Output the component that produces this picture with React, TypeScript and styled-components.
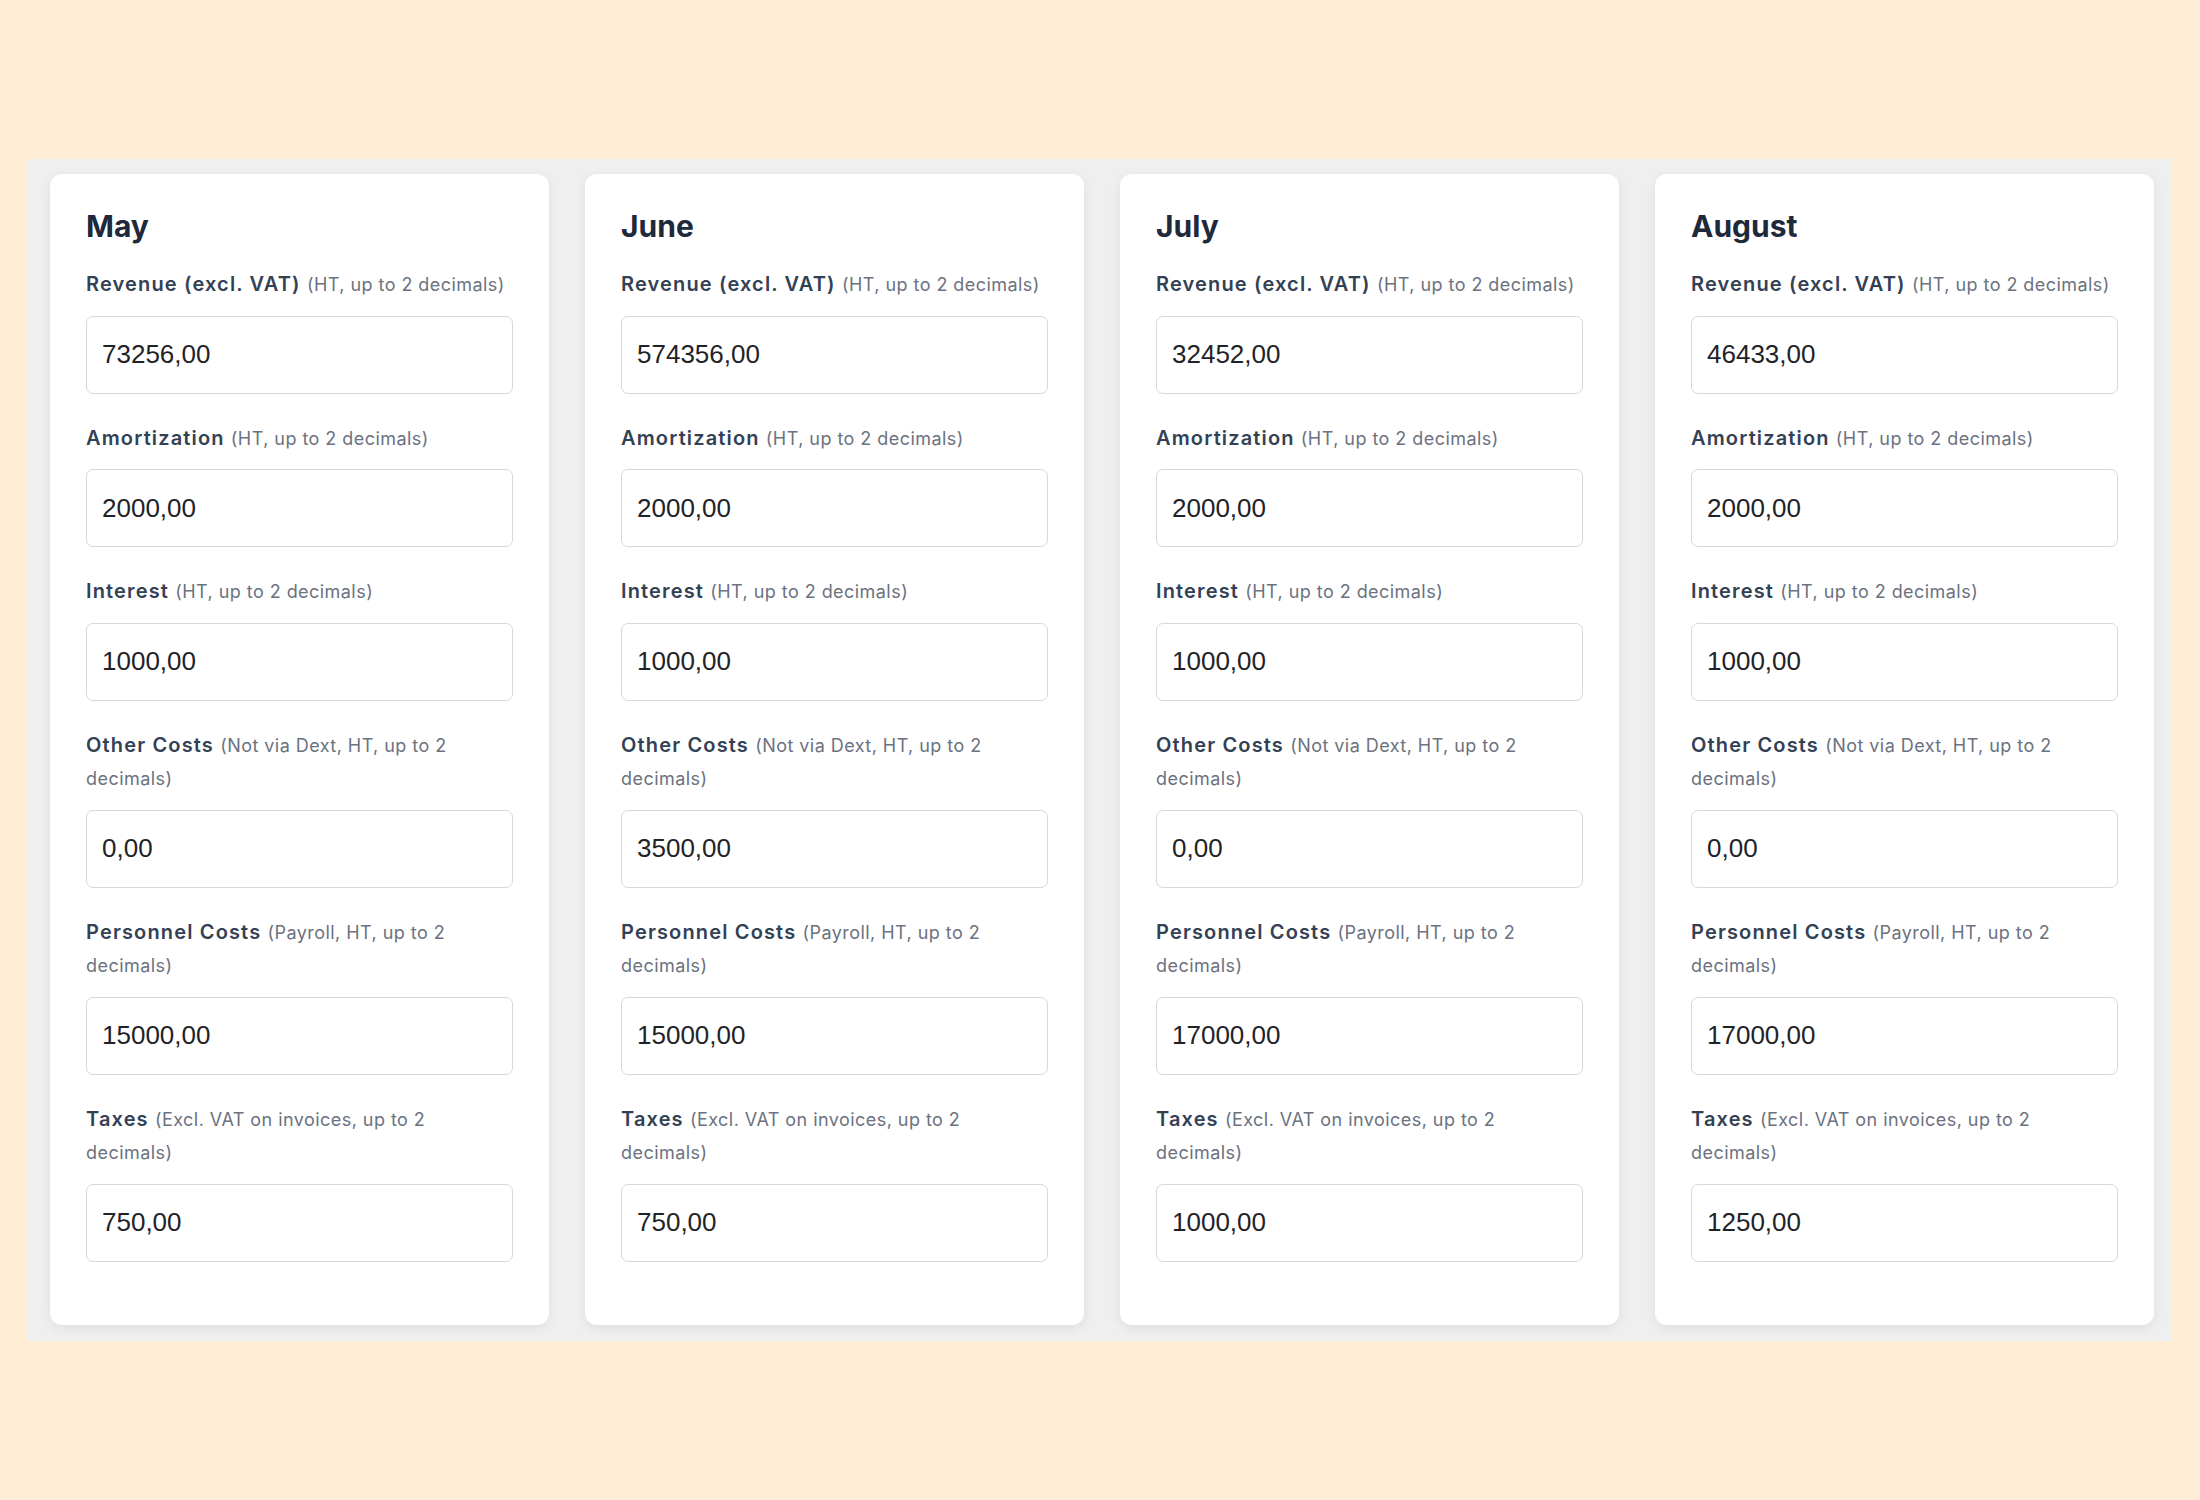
import React, { useState } from "react";
import styled, { createGlobalStyle } from "styled-components";

const GlobalStyle = createGlobalStyle`
  html, body {
    margin: 0;
    padding: 0;
    background: #ffedd5;
    font-family: Inter, "Noto Sans", "Liberation Sans", sans-serif;
  }
  * {
    box-sizing: border-box;
  }
`;

type Field = {
  key: string;
  label: string;
  hint: string;
};

const FIELDS: Field[] = [
  { key: "revenue", label: "Revenue (excl. VAT)", hint: "(HT, up to 2 decimals)" },
  { key: "amortization", label: "Amortization", hint: "(HT, up to 2 decimals)" },
  { key: "interest", label: "Interest", hint: "(HT, up to 2 decimals)" },
  { key: "other", label: "Other Costs", hint: "(Not via Dext, HT, up to 2 decimals)" },
  { key: "personnel", label: "Personnel Costs", hint: "(Payroll, HT, up to 2 decimals)" },
  { key: "taxes", label: "Taxes", hint: "(Excl. VAT on invoices, up to 2 decimals)" },
];

type MonthValues = Record<string, string>;

const MONTHS: { name: string; values: MonthValues }[] = [
  {
    name: "May",
    values: {
      revenue: "73256,00",
      amortization: "2000,00",
      interest: "1000,00",
      other: "0,00",
      personnel: "15000,00",
      taxes: "750,00",
    },
  },
  {
    name: "June",
    values: {
      revenue: "574356,00",
      amortization: "2000,00",
      interest: "1000,00",
      other: "3500,00",
      personnel: "15000,00",
      taxes: "750,00",
    },
  },
  {
    name: "July",
    values: {
      revenue: "32452,00",
      amortization: "2000,00",
      interest: "1000,00",
      other: "0,00",
      personnel: "17000,00",
      taxes: "1000,00",
    },
  },
  {
    name: "August",
    values: {
      revenue: "46433,00",
      amortization: "2000,00",
      interest: "1000,00",
      other: "0,00",
      personnel: "17000,00",
      taxes: "1250,00",
    },
  },
];

function MonthCard({ name, initial }: { name: string; initial: MonthValues }) {
  const [values, setValues] = useState<MonthValues>(initial);

  return (
    <Card>
      <MonthTitle>{name}</MonthTitle>
      {FIELDS.map((f) => (
        <FieldGroup key={f.key}>
          <Label htmlFor={`${name}-${f.key}`}>
            {f.label} <Hint>{f.hint}</Hint>
          </Label>
          <AmountInput
            id={`${name}-${f.key}`}
            type="text"
            inputMode="decimal"
            value={values[f.key]}
            onChange={(e) => setValues({ ...values, [f.key]: e.target.value })}
          />
        </FieldGroup>
      ))}
    </Card>
  );
}

export default function App() {
  return (
    <>
      <GlobalStyle />
      <Page>
        <Board>
          {MONTHS.map((m) => (
            <MonthCard key={m.name} name={m.name} initial={m.values} />
          ))}
        </Board>
      </Page>
    </>
  );
}

const Page = styled.div`
  min-height: 100vh;
  padding: 159px 28px 0;
`;

const Board = styled.div`
  display: grid;
  grid-template-columns: repeat(4, 1fr);
  gap: 36px;
  padding: 15px 18px 16px 22px;
  background: #efefef;
`;

const Card = styled.div`
  background: #fff;
  border-radius: 12px;
  padding: 34px 36px 35px;
  box-shadow: 0 3px 12px rgba(0, 0, 0, 0.07);
`;

const MonthTitle = styled.h2`
  margin: 0 0 24px;
  font-size: 30px;
  line-height: 36px;
  font-weight: 700;
  color: #1e293b;
`;

const FieldGroup = styled.div`
  margin-bottom: 28px;
`;

const Label = styled.label`
  display: block;
  margin-bottom: 14px;
  font-size: 20px;
  line-height: 33.5px;
  font-weight: 600;
  letter-spacing: 1.15px;
  color: #334155;
`;

/* smaller grey note after the label; its own line-height stays under
   the label's so mixed sizes don't grow the line box */
const Hint = styled.span`
  font-size: 18px;
  line-height: 20px;
  font-weight: 400;
  letter-spacing: 0.45px;
  color: #6b7280;
`;

const AmountInput = styled.input`
  display: block;
  width: 100%;
  height: 78px;
  padding: 0 15px;
  border: 1px solid #d5d8de;
  border-radius: 7px;
  background: #fff;
  font-family: "Liberation Sans", Arial, sans-serif;
  font-size: 26px;
  color: #1f2328;
  outline: none;

  &:focus {
    border-color: #94a3b8;
  }
`;
